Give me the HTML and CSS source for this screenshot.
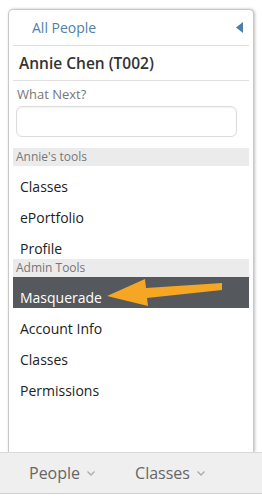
FILE: index.html
```html
<!DOCTYPE html>
<html lang="en">
<head>
    <meta charset="UTF-8">
    <meta name="viewport" content="width=device-width, initial-scale=1.0">
    <title>People Menu</title>
    <link rel="stylesheet" href="styles.css">
</head>
<body>
    <div class="panel">
        <!-- Back to list -->
        <div class="panel-head">
            <span class="back-link">All People</span>
            <svg class="collapse" width="7" height="11" viewBox="0 0 7 11">
                <polygon points="7,0 7,11 0,5.5" fill="#4d7fae"/>
            </svg>
        </div>

        <div class="person-name">Annie Chen (T002)</div>

        <div class="next-label">What Next?</div>
        <input class="next-input" type="text">

        <div class="section-title">Annie's tools</div>
        <div class="menu-item">Classes</div>
        <div class="menu-item">ePortfolio</div>
        <div class="menu-item">Profile</div>

        <div class="section-title">Admin Tools</div>
        <div class="menu-item active">
            Masquerade
            <!-- callout arrow -->
            <svg class="callout" width="215" height="32" viewBox="0 0 215 32">
                <polygon points="94,19 132,2 133,11 209,6 209,13 134,21 135,29" fill="#f5a623"/>
            </svg>
        </div>
        <div class="menu-item">Account Info</div>
        <div class="menu-item">Classes</div>
        <div class="menu-item">Permissions</div>
    </div>

    <div class="tab-bar">
        <span class="tab">People
            <svg width="8" height="5" viewBox="0 0 8 5"><polyline points="0.5,0.5 4,4 7.5,0.5" fill="none" stroke="#aaa" stroke-width="1.3"/></svg>
        </span>
        <span class="tab">Classes
            <svg width="8" height="5" viewBox="0 0 8 5"><polyline points="0.5,0.5 4,4 7.5,0.5" fill="none" stroke="#aaa" stroke-width="1.3"/></svg>
        </span>
    </div>
</body>
</html>
```

FILE: styles.css
```css
body {
    margin: 0;
    background-color: #fff;
    font-family: "Open Sans", Arial, sans-serif;
    color: #222;
}

.panel {
    box-sizing: border-box;
    height: 443px;
    margin: 9px 8px 0 8px;
    padding: 0 4px;
    border: 1px solid #c9c9c9;
    border-bottom: none;
    border-radius: 5px 5px 0 0;
    box-shadow: 1px 0 3px rgba(0, 0, 0, 0.25);
    background-color: #fff;
}

.panel-head {
    display: flex;
    align-items: center;
    justify-content: space-between;
    height: 35px;
    padding: 0 6px 0 19px;
    border-bottom: 1px solid #e0e0e0;
}

.back-link {
    font-size: 14px;
    color: #4f7fa6;
}

.person-name {
    height: 34px;
    line-height: 34px;
    padding-left: 6px;
    font-size: 15.5px;
    font-weight: 600;
    color: #333;
    border-bottom: 1px solid #e0e0e0;
}

.next-label {
    height: 21px;
    padding: 4px 0 0 4px;
    line-height: 18px;
    font-size: 13px;
    color: #777;
}

.next-input {
    display: block;
    box-sizing: border-box;
    width: 221px;
    height: 31px;
    margin: 0 0 11px 3px;
    border: 1px solid #dcdcdc;
    border-radius: 6px;
    box-shadow: inset 0 1px 2px rgba(0, 0, 0, 0.06);
}

.section-title {
    height: 18px;
    line-height: 18px;
    padding-left: 3px;
    font-size: 12px;
    color: #777;
    background-color: #ebebeb;
}

.menu-item {
    position: relative;
    box-sizing: border-box;
    height: 31px;
    padding: 11px 0 0 7px;
    line-height: 19px;
    font-size: 14px;
    color: #222;
}

.menu-item.active {
    background-color: #55585c;
    color: #fff;
}

.callout {
    position: absolute;
    left: 0;
    top: 0;
    overflow: visible;
}

.tab-bar {
    display: flex;
    align-items: center;
    gap: 40px;
    box-sizing: border-box;
    height: 42px;
    padding-left: 29px;
    border-top: 1px solid #dadada;
    border-bottom: 1px solid #cfcfcf;
    background-color: #efefef;
}

.tab {
    display: flex;
    align-items: center;
    gap: 7px;
    font-size: 16px;
    color: #666;
}
```
